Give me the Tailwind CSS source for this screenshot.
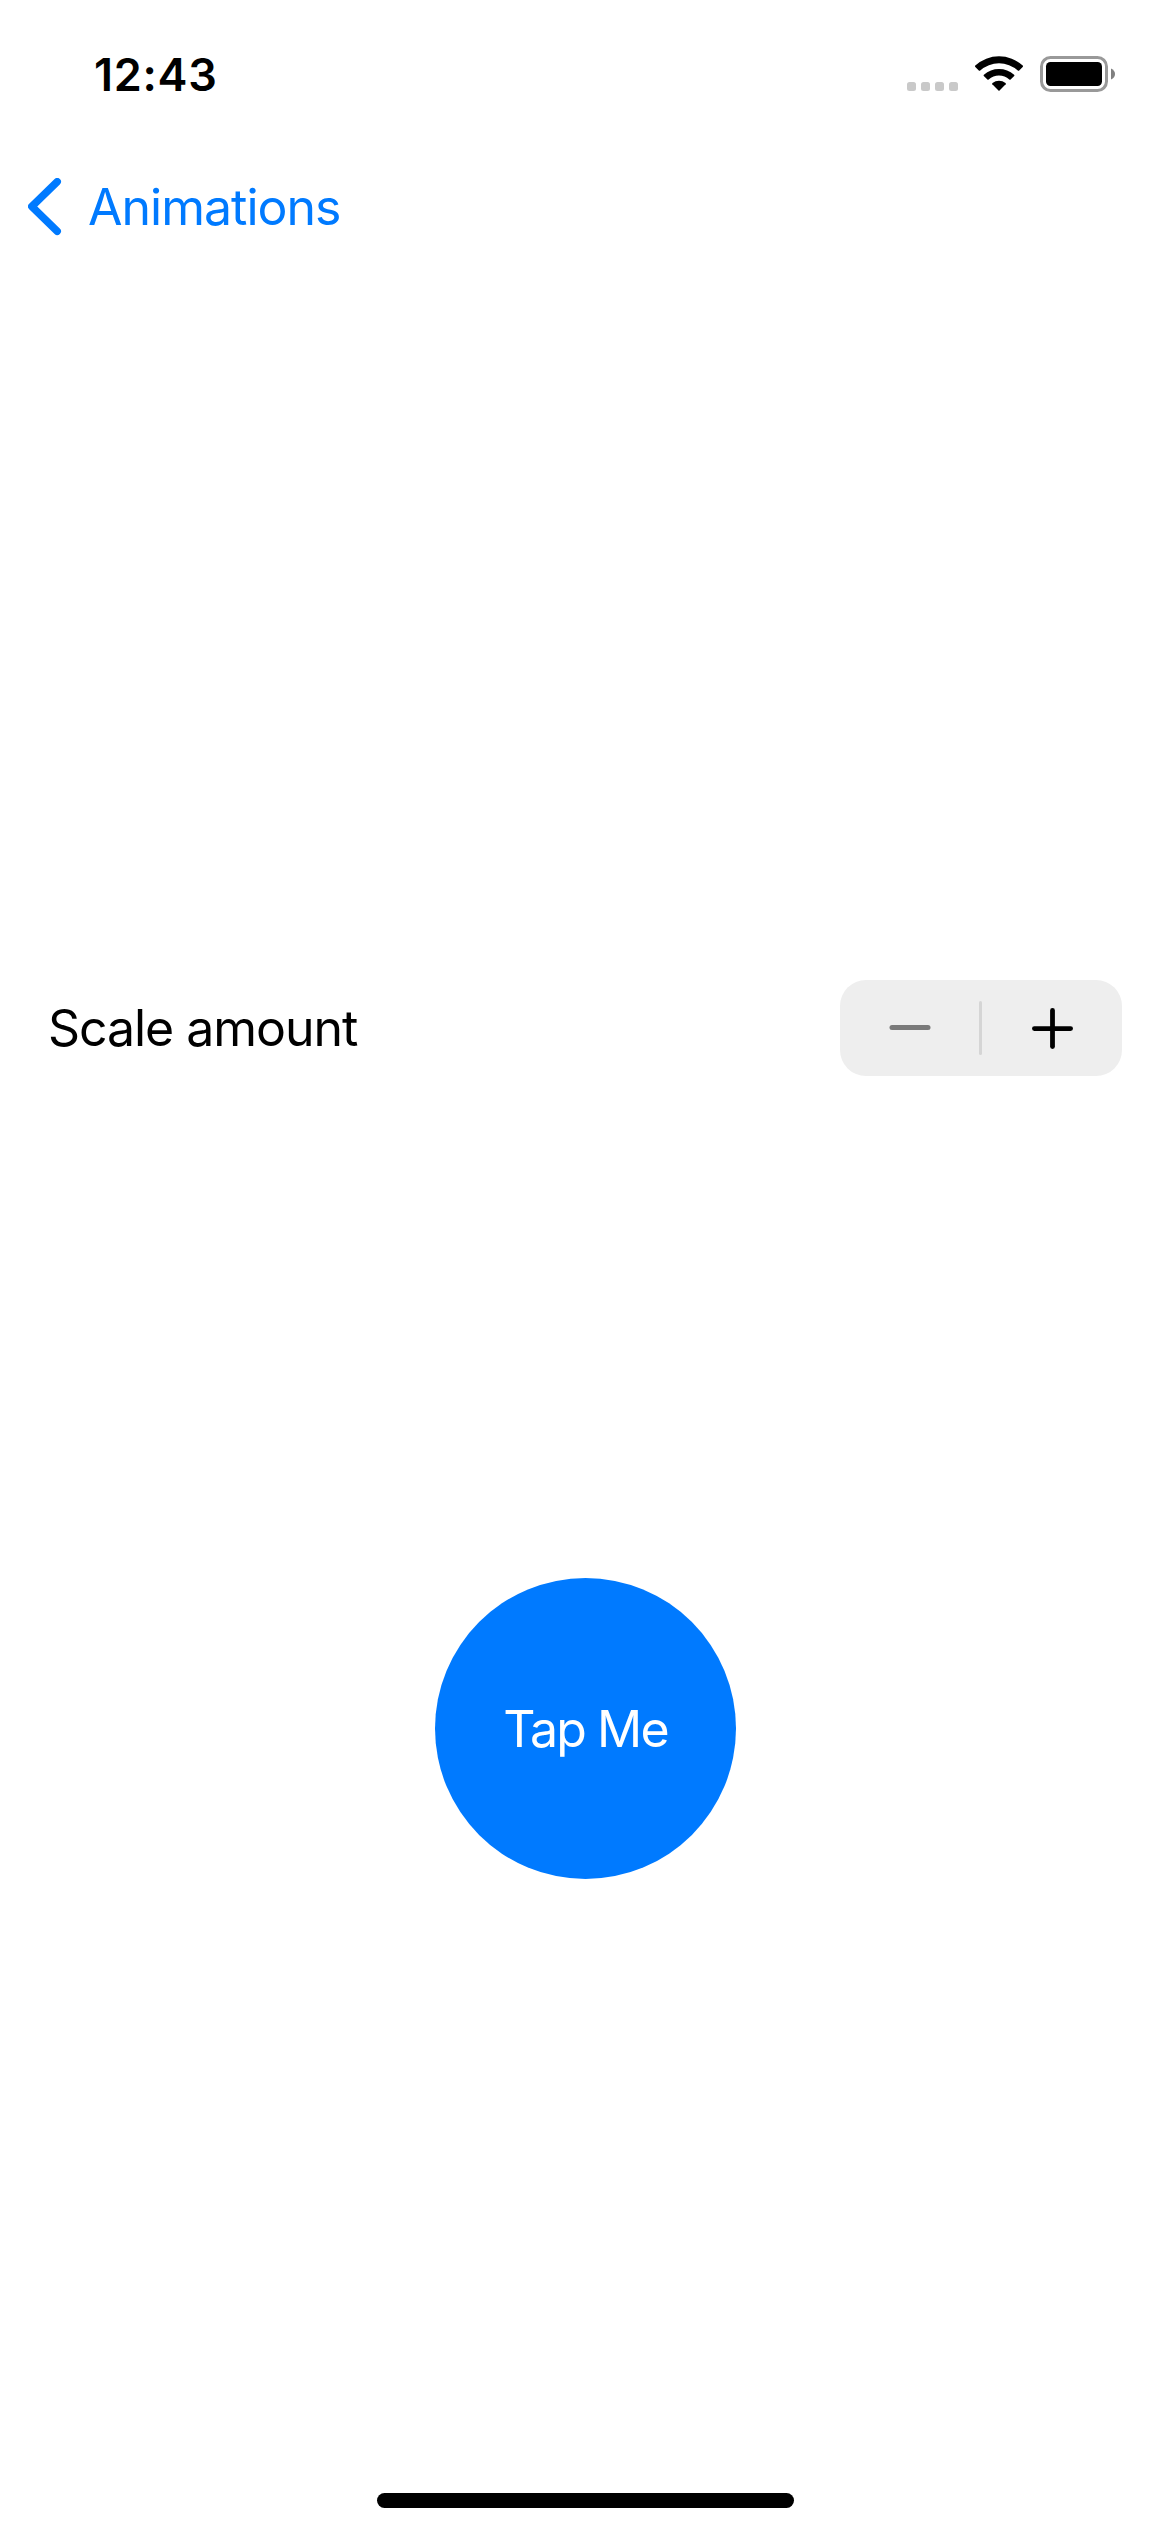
<!DOCTYPE html>
<html lang="en">
<head>
<meta charset="utf-8">
<title>Animations</title>
<script src="https://cdn.jsdelivr.net/npm/@tailwindcss/browser@4"></script>
</head>
<body class="bg-white">
<div class="flex h-[2532px] w-[1170px] flex-col overflow-hidden bg-white font-['Inter',sans-serif] text-black">
  <!-- Status bar -->
  <header class="flex h-[141px] justify-between pl-[94px] pr-[55px] pt-[50px]">
    <div class="h-[50px] text-[45px] leading-[50px] font-semibold tracking-[0.7px]">12:43</div>
    <svg class="h-[50px] w-[208px]" viewBox="907 50 208 50">
      <g fill="#c9c9c9">
        <rect x="907" y="82" width="9" height="9" rx="2.5"/>
        <rect x="921" y="82" width="9" height="9" rx="2.5"/>
        <rect x="935" y="82" width="9" height="9" rx="2.5"/>
        <rect x="949" y="82" width="9" height="9" rx="2.5"/>
      </g>
      <path d="M999 91 L992.3 84.300 Q991.800 83.600 992.500 83 A10.500 10.500 0 0 1 1005.500 83 Q1006.200 83.600 1005.700 84.300 Z"/>
      <path d="M983.8 76 Q983.2 75.300 983.9 74.700 A22.800 22.800 0 0 1 1014.1 74.700 Q1014.800 75.300 1014.2 76 L1010.6 79.600 Q1010 80.100 1009.300 79.500 A15.500 15.500 0 0 0 988.700 79.500 Q988 80.100 987.400 79.600 Z"/>
      <path d="M975.300 67 Q974.600 66.300 975.300 65.600 A35 35 0 0 1 1022.700 65.600 Q1023.400 66.300 1022.700 67 L1019.200 70.500 Q1018.500 71.100 1017.800 70.500 A28.200 28.200 0 0 0 980.200 70.500 Q979.500 71.100 978.800 70.500 Z"/>
      <rect x="1041.5" y="57.5" width="65" height="33" rx="9" fill="none" stroke="#999999" stroke-width="3"/>
      <rect x="1046" y="62" width="56" height="24" rx="4.5"/>
      <path d="M1111 68.5 Q1115 70.5 1115 74 Q1115 77.500 1111 79.500 Z" fill="#808080"/>
    </svg>
  </header>

  <!-- Navigation bar -->
  <nav class="flex h-[132px] items-center pl-[28px] text-[#007aff]">
    <svg class="h-[58px] w-[34px]" viewBox="28 178 34 58" fill="none" stroke="currentColor" stroke-width="7.500" stroke-linecap="round" stroke-linejoin="round"><path d="M57.200 181.700 L31.800 206.500 L57.200 231.300"/></svg>
    <a class="ml-[26px] text-[50px] leading-[60px] tracking-[-1px]">Animations</a>
  </nav>

  <main class="flex flex-1 flex-col items-center pt-[707px]">
    <div class="flex w-full items-center justify-between pl-[48px] pr-[48px]">
      <span class="text-[50px] leading-[96px] tracking-[-1.050px]">Scale amount</span>
      <div class="flex h-[96px] w-[282px] items-center justify-between rounded-[26px] bg-[#eeeeee]">
        <button class="flex h-full w-[139px] items-center justify-center" aria-label="Decrement"><svg class="h-[42px] w-[42px]" viewBox="0 0 42 42"><rect x="0.500" y="18" width="41" height="5" rx="2.500" fill="#7a7a7a"/></svg></button>
        <div class="h-[54px] w-[3px] rounded-full bg-[#d5d5d5]"></div>
        <button class="flex h-full w-[140px] items-center justify-center" aria-label="Increment"><svg class="h-[41px] w-[41px]" viewBox="0 0 41 41"><rect y="18.200" width="41" height="4.800" rx="2.400"/><rect x="18.100" width="4.800" height="41" rx="2.400"/></svg></button>
      </div>
    </div>
    <button class="ml-px mt-[502px] flex h-[301px] w-[301px] items-center justify-center rounded-full bg-[#007aff] text-[50px] leading-[60px] tracking-[-1.900px] text-white">Tap Me</button>
  </main>

  <!-- Home indicator -->
  <footer class="flex justify-center pb-[24px]">
    <div class="ml-px h-[15px] w-[417px] rounded-full bg-black"></div>
  </footer>
</div>
</body>
</html>
